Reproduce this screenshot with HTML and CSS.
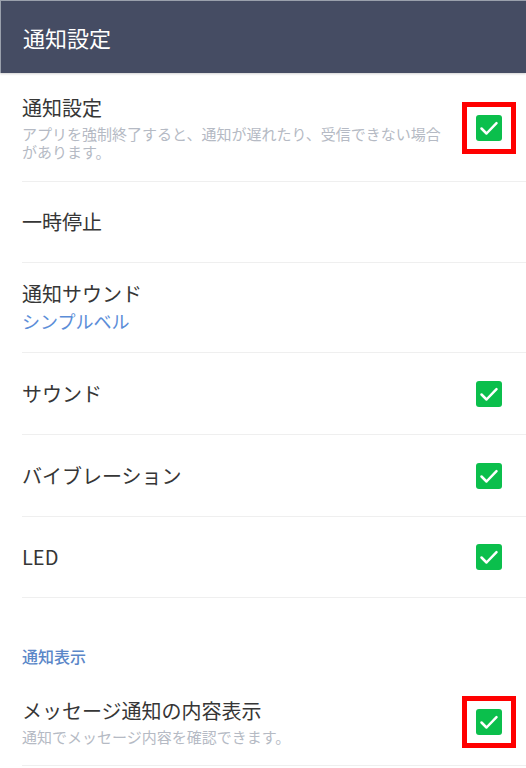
FILE: index.html
```html
<!DOCTYPE html>
<html lang="ja">
<head>
<meta charset="utf-8">
<title>通知設定</title>
<link rel="stylesheet" href="styles.css">
</head>
<body>
<header class="appbar"><h1 class="appbar-title">通知設定</h1></header>
<main class="list">
  <div class="item item-tall">
    <div class="text">
      <div class="title">通知設定</div>
      <div class="desc">アプリを強制終了すると、通知が遅れたり、受信できない場合があります。</div>
    </div>
    <div class="check-wrap highlight"><span class="check"><svg viewBox="0 0 26 26" width="26" height="26"><path d="M5.5 13.5l5 5 10-10.3" fill="none" stroke="#fff" stroke-width="2.5" stroke-linecap="round" stroke-linejoin="round"/></svg></span></div>
  </div>
  <div class="item">
    <div class="text"><div class="title">一時停止</div></div>
  </div>
  <div class="item item-sound">
    <div class="text">
      <div class="title">通知サウンド</div>
      <div class="value">シンプルベル</div>
    </div>
  </div>
  <div class="item item-81">
    <div class="text"><div class="title">サウンド</div></div>
    <div class="check-wrap"><span class="check"><svg viewBox="0 0 26 26" width="26" height="26"><path d="M5.5 13.5l5 5 10-10.3" fill="none" stroke="#fff" stroke-width="2.5" stroke-linecap="round" stroke-linejoin="round"/></svg></span></div>
  </div>
  <div class="item item-81">
    <div class="text"><div class="title">バイブレーション</div></div>
    <div class="check-wrap"><span class="check"><svg viewBox="0 0 26 26" width="26" height="26"><path d="M5.5 13.5l5 5 10-10.3" fill="none" stroke="#fff" stroke-width="2.5" stroke-linecap="round" stroke-linejoin="round"/></svg></span></div>
  </div>
  <div class="item">
    <div class="text"><div class="title">LED</div></div>
    <div class="check-wrap"><span class="check"><svg viewBox="0 0 26 26" width="26" height="26"><path d="M5.5 13.5l5 5 10-10.3" fill="none" stroke="#fff" stroke-width="2.5" stroke-linecap="round" stroke-linejoin="round"/></svg></span></div>
  </div>
  <div class="section">通知表示</div>
  <div class="item item-msg">
    <div class="text">
      <div class="title">メッセージ通知の内容表示</div>
      <div class="desc">通知でメッセージ内容を確認できます。</div>
    </div>
    <div class="check-wrap highlight"><span class="check"><svg viewBox="0 0 26 26" width="26" height="26"><path d="M5.5 13.5l5 5 10-10.3" fill="none" stroke="#fff" stroke-width="2.5" stroke-linecap="round" stroke-linejoin="round"/></svg></span></div>
  </div>
</main>
</body>
</html>
```
FILE: styles.css
```css
html, body {
  margin: 0;
  padding: 0;
  background: #ffffff;
  font-family: "Noto Sans CJK JP", "Noto Sans", sans-serif;
}

.appbar {
  height: 73px;
  background: #454c63;
  border-top: 1px solid #9aa0ac;
  border-left: 1px solid #9aa0ac;
  box-sizing: border-box;
  display: flex;
  align-items: center;
  padding-left: 22px;
  box-shadow: 0 1px 2px rgba(0, 0, 0, 0.18);
}

.appbar-title {
  margin: 0;
  color: #ffffff;
  font-size: 22px;
  font-weight: 400;
  line-height: 30px;
}

.list {
  margin-top: 1px;
}

.item {
  margin-left: 22px;
  padding-right: 10px;
  min-height: 80px;
  display: flex;
  align-items: center;
  gap: 10px;
  border-bottom: 1px solid #efefef;
}

.item-tall {
  min-height: 107px;
}

.item-81 {
  min-height: 81px;
}

.item-sound {
  min-height: 90px;
  align-items: flex-start;
  padding-top: 17px;
  box-sizing: border-box;
}

.item-msg {
  min-height: 87px;
}

.text {
  flex: 1;
  min-width: 0;
}

.title {
  font-size: 20px;
  line-height: 28px;
  color: #363636;
}

.desc {
  margin-top: 3px;
  font-size: 15px;
  line-height: 18px;
  color: #b5bac4;
}

.value {
  margin-top: 1px;
  font-size: 18px;
  line-height: 24px;
  color: #5b8dd8;
}

.section {
  margin-left: 22px;
  padding-top: 47px;
  height: 80px;
  box-sizing: border-box;
  font-size: 16px;
  line-height: 22px;
  font-weight: 500;
  color: #5b87c8;
}

.check-wrap {
  width: 54px;
  height: 52px;
  box-sizing: border-box;
  display: flex;
  align-items: center;
  justify-content: center;
  flex: none;
}

.check-wrap.highlight {
  border: 5px solid #ff0000;
}

.check {
  width: 26px;
  height: 26px;
  border-radius: 3px;
  background: #0bbf4c;
  display: block;
}

.check svg {
  display: block;
}
```
